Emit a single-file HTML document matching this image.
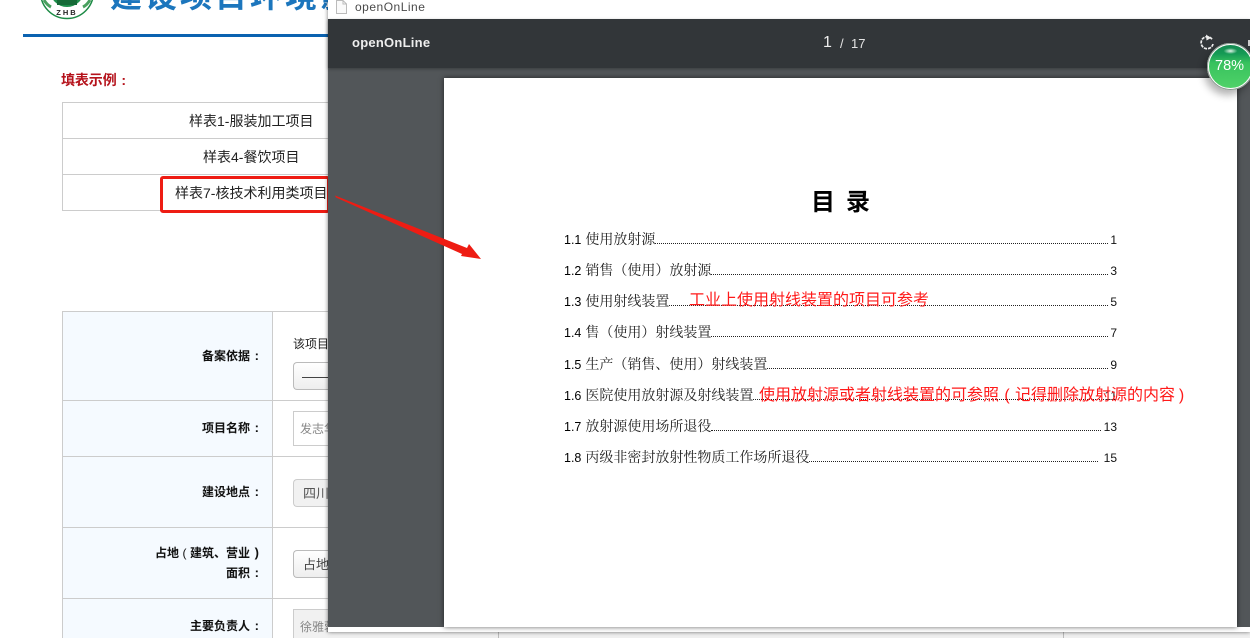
<!DOCTYPE html>
<html><head><meta charset="utf-8">
<style>
html,body{margin:0;padding:0;width:1250px;height:638px;overflow:hidden;background:#fff}
body{position:relative;font-family:"Liberation Sans","Noto Sans CJK SC",sans-serif;color:#000}
.a{position:absolute;white-space:nowrap}
.l{position:absolute;background:#ccc}
.lb{position:absolute;left:63px;width:196px;text-align:right;font-size:12px;font-weight:bold;line-height:20px;color:#111;white-space:nowrap}
.c{display:inline-block;width:9px;text-align:right;font-size:13px}
.o{display:inline-block;width:11px;text-align:center;font-weight:normal}
.in{position:absolute;left:293px;width:35px;overflow:hidden;white-space:nowrap;box-sizing:border-box;border:1px solid #ccc;border-right:0;font-size:12px;color:#777;padding-left:6px}
.toc{position:absolute;left:564px;font:14px/16px "Noto Serif CJK SC","Liberation Serif",serif;color:#222;white-space:nowrap}
.toc b{font:normal 12.5px/16px "Liberation Sans",sans-serif;color:#000;margin-right:4px}
.dots{position:absolute;height:0;border-bottom:1px dotted #222}
.pn{position:absolute;font:12px/16px "Liberation Sans",sans-serif;color:#111;text-align:right;right:133px}
.red{position:absolute;color:#ff1a1a;font-size:16px;line-height:20px;white-space:nowrap;font-family:"Liberation Sans","Noto Sans CJK SC",sans-serif}
.p{display:inline-block;width:16px;text-align:center}
</style></head><body>

<!-- header -->
<svg class="a" style="left:35px;top:0" width="62" height="22" viewBox="0 0 62 22">
<circle cx="32" cy="-8" r="26.5" fill="#fff" stroke="#1c8a45" stroke-width="1.5"/>
<circle cx="32" cy="-10" r="17" fill="#1f8f4c"/>
<rect x="22" y="0" width="20" height="5" fill="#166b38"/>
<path d="M9 0q3 5 7 7M55 0q-3 5-7 7" stroke="#4aa05f" stroke-width="3" fill="none"/>
<text x="32" y="15" text-anchor="middle" font-family="Liberation Sans" font-weight="bold" font-size="7.5" letter-spacing="2" fill="#222">ZHB</text>
</svg>
<div class="a" style="left:110px;top:-23px;font-size:32px;line-height:38px;font-weight:bold;color:#1c76bd;letter-spacing:3px">建设项目环境影响登记</div>
<div class="a" style="left:23px;top:34px;width:310px;height:3px;background:#0b62b0"></div>

<div class="a" style="left:61px;top:71px;font-size:14px;line-height:18px;font-weight:bold;color:#b5121b;letter-spacing:-.1px">填表示例<span style="display:inline-block;width:14px;text-align:center">:</span></div>

<!-- sample table -->
<div class="l" style="left:62px;top:102px;width:270px;height:1px"></div>
<div class="l" style="left:62px;top:138px;width:270px;height:1px"></div>
<div class="l" style="left:62px;top:174px;width:270px;height:1px"></div>
<div class="l" style="left:62px;top:210px;width:270px;height:1px"></div>
<div class="l" style="left:62px;top:102px;width:1px;height:109px"></div>
<div class="a" style="left:189px;top:112px;font-size:14px;line-height:18px;color:#222">样表1-服装加工项目</div>
<div class="a" style="left:203px;top:148px;font-size:14px;line-height:18px;color:#222">样表4-餐饮项目</div>
<div class="a" style="left:175px;top:184px;font-size:14px;line-height:18px;color:#222">样表7-核技术利用类项目</div>
<div class="a" style="left:160px;top:176px;width:170px;height:37px;box-sizing:border-box;border:3px solid #ee1c13;border-radius:3px"></div>

<!-- form table -->
<div class="a" style="left:62px;top:311px;width:211px;height:327px;background:#f5faff"></div>
<div class="l" style="left:62px;top:311px;width:270px;height:1px"></div>
<div class="l" style="left:62px;top:400px;width:270px;height:1px"></div>
<div class="l" style="left:62px;top:456px;width:270px;height:1px"></div>
<div class="l" style="left:62px;top:527px;width:270px;height:1px"></div>
<div class="l" style="left:62px;top:598px;width:270px;height:1px"></div>
<div class="l" style="left:62px;top:311px;width:1px;height:327px"></div>
<div class="l" style="left:272px;top:311px;width:1px;height:327px"></div>
<div class="lb" style="top:346px">备案依据<span class="c">:</span></div>
<div class="lb" style="top:418px">项目名称<span class="c">:</span></div>
<div class="lb" style="top:482px">建设地点<span class="c">:</span></div>
<div class="lb" style="top:543px">占地<span class="o">(</span>建筑、营业<span class="c">)</span><br>面积<span class="c">:</span></div>
<div class="lb" style="top:616px">主要负责人<span class="c">:</span></div>
<div class="a" style="left:293px;top:335px;font-size:12px;line-height:18px;color:#222">该项目</div>
<div class="in" style="top:362px;height:28px;border-radius:4px 0 0 4px;border-color:#bbb;background:linear-gradient(#fff,#eee)"></div>
<div class="a" style="left:302px;top:377px;width:26px;height:1px;background:#444"></div>
<div class="in" style="top:411px;height:35px;line-height:35px;background:#fff;color:#888">发志华</div>
<div class="in" style="top:479px;height:28px;line-height:28px;background:#f1f1f1;border-radius:4px 0 0 4px;font-size:13px;color:#555;padding-left:9px">四川省</div>
<div class="in" style="top:550px;height:28px;line-height:28px;background:linear-gradient(#fff,#eee);border-radius:4px 0 0 4px;font-size:13px;color:#444;padding-left:9px;border-color:#bbb">占地面积</div>
<div class="in" style="top:609px;height:35px;line-height:35px;background:#f1f1f1;color:#888">徐雅蓉</div>

<!-- strip below modal -->
<div class="a" style="left:328px;top:632px;width:922px;height:6px;background:#f0f0f0"></div>
<div class="l" style="left:498px;top:632px;width:1px;height:6px;background:#bbb"></div>
<div class="l" style="left:1063px;top:632px;width:1px;height:6px;background:#bbb"></div>

<!-- modal -->
<div class="a" style="left:328px;top:0;width:922px;height:632px;background:#fff;box-shadow:0 0 4px rgba(0,0,0,.55)"></div>
<svg class="a" style="left:335px;top:0" width="13" height="14" viewBox="0 0 13 14"><path d="M1.5 .5H8L11.5 4V13.5H1.5ZM8 .5V4H11.5" fill="#fafafa" stroke="#bbb"/></svg>
<div class="a" style="left:355px;top:0;font-size:12px;line-height:15px;color:#4a4a4a;letter-spacing:.5px">openOnLine</div>

<div class="a" style="left:328px;top:19px;width:922px;height:608px;background:#525659"></div>
<div class="a" style="left:328px;top:19px;width:922px;height:49px;background:#323639;box-shadow:0 1px 3px rgba(0,0,0,.3)"></div>
<div class="a" style="left:352px;top:35px;font-size:13px;line-height:16px;font-weight:bold;color:#eee;letter-spacing:.25px">openOnLine</div>
<div class="a" style="left:823px;top:34px;font-size:16px;line-height:18px;color:#eee">1</div>
<div class="a" style="left:840px;top:35px;font-size:13px;line-height:17px;color:#e4e4e4">/</div>
<div class="a" style="left:851px;top:35px;font-size:13px;line-height:17px;color:#e4e4e4">17</div>

<svg class="a" style="left:1198px;top:33px" width="20" height="20" viewBox="0 0 20 20"><path d="M14 6.2A6 6 0 1 0 15 11" fill="none" stroke="#eee" stroke-width="1.7" stroke-dasharray="3.2 1"/><path d="M8 1.5L13 5 8.5 7.5Z" fill="#eee"/></svg>
<div class="a" style="left:1248px;top:40px;width:2px;height:6px;background:#ccc"></div>

<!-- pdf page -->
<div class="a" style="left:444px;top:78px;width:793px;height:549px;background:#fff;box-shadow:0 0 5px rgba(0,0,0,.6)"></div>
<div class="a" style="left:811px;top:187px;font-size:24px;line-height:32px;font-weight:bold;letter-spacing:11px;color:#000">目录</div>

<div class="toc" style="top:231px"><b>1.1</b>使用放射源</div>
<div class="dots" style="left:655px;width:453px;top:243px"></div><div class="pn" style="top:232px">1</div>
<div class="toc" style="top:262px"><b>1.2</b>销售（使用）放射源</div>
<div class="dots" style="left:711px;width:397px;top:274px"></div><div class="pn" style="top:263px">3</div>
<div class="toc" style="top:293px"><b>1.3</b>使用射线装置</div>
<div class="dots" style="left:669px;width:439px;top:305px"></div><div class="pn" style="top:294px">5</div>
<div class="toc" style="top:324px"><b>1.4</b>售（使用）射线装置</div>
<div class="dots" style="left:711px;width:397px;top:336px"></div><div class="pn" style="top:325px">7</div>
<div class="toc" style="top:356px"><b>1.5</b>生产（销售、使用）射线装置</div>
<div class="dots" style="left:767px;width:341px;top:368px"></div><div class="pn" style="top:357px">9</div>
<div class="toc" style="top:387px"><b>1.6</b>医院使用放射源及射线装置</div>
<div class="dots" style="left:753px;width:351px;top:399px"></div><div class="pn" style="top:388px">11</div>
<div class="toc" style="top:418px"><b>1.7</b>放射源使用场所退役</div>
<div class="dots" style="left:711px;width:390px;top:430px"></div><div class="pn" style="top:419px">13</div>
<div class="toc" style="top:449px"><b>1.8</b>丙级非密封放射性物质工作场所退役</div>
<div class="dots" style="left:809px;width:289px;top:461px"></div><div class="pn" style="top:450px">15</div>

<div class="red" style="left:689px;top:291px">工业上使用射线装置的项目可参考</div>
<div class="red" style="left:759px;top:386px">使用放射源或者射线装置的可参照<span class="p">(</span>记得删除放射源的内容<span class="p" style="width:13px">)</span></div>

<!-- arrow -->
<svg class="a" style="left:330px;top:190px" width="160" height="75" viewBox="330 190 160 75"><polygon points="335,195.5 467,248 469,244 481,259 461,256 462,254 336,197.5" fill="#ee1c13"/></svg>

<!-- badge -->
<div class="a" style="left:1207px;top:43px;width:47px;height:47px;box-sizing:border-box;border-radius:50%;border:2px solid #fff;outline:1px solid #8a9a90;outline-offset:-1px;background:radial-gradient(ellipse 7px 3px at 50% 6px,#e4f5ea 0,rgba(228,245,234,0) 100%),linear-gradient(#138a50 0,#159a55 20%,#38c25e 42%,#4fd268 100%);box-shadow:-3px 5px 8px rgba(0,0,0,.3)"></div>
<div class="a" style="left:1215px;top:57px;font-size:14.5px;line-height:18px;color:#fff">78%</div>

</body></html>
